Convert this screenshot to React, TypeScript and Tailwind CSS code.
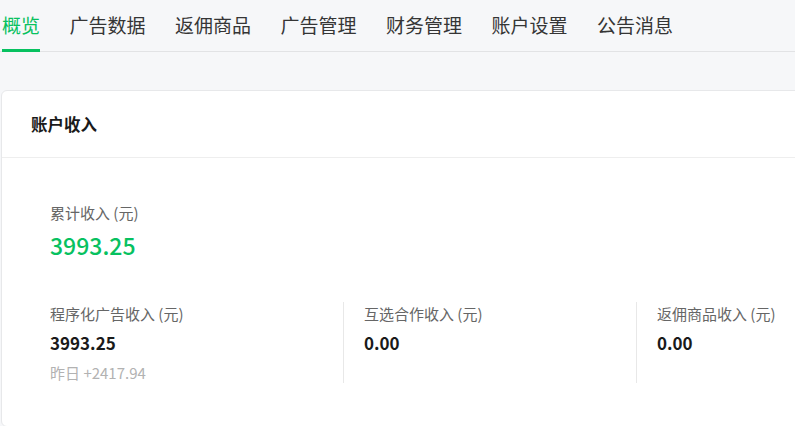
const tabs = ["概览", "广告数据", "返佣商品", "广告管理", "财务管理", "账户设置", "公告消息"];

const channels = [
  { label: "程序化广告收入 (元)", value: "3993.25", yesterday: "+2417.94" },
  { label: "互选合作收入 (元)", value: "0.00" },
  { label: "返佣商品收入 (元)", value: "0.00" },
];

export default function App() {
  return (
    <div
      className="min-h-screen bg-[#f6f7f9] overflow-hidden"
      style={{ fontFamily: '"Noto Sans CJK SC", "Noto Sans", sans-serif' }}
    >
      <div className="flex h-[52px] border-b border-[#e2e3e5] pl-[2px]">
        {tabs.map((tab, i) => (
          <div
            key={tab}
            className={
              i === 0
                ? "relative mr-[29.5px] flex shrink-0 items-center text-[19px] text-[#07c160]"
                : "relative mr-[29.5px] flex shrink-0 items-center text-[19px] text-[#353535]"
            }
          >
            {tab}
            {i === 0 && (
              <span className="absolute bottom-[-1px] left-0 right-0 h-[3px] bg-[#07c160]" />
            )}
          </div>
        ))}
      </div>

      <div className="ml-[1px] mt-[38px] w-[960px] rounded-md border border-[#e7e8ea] bg-white">
        <div className="flex h-[67px] items-center border-b border-[#eeeeee] pl-[29px] text-[16.5px] font-bold text-[#1a1a1a]">
          账户收入
        </div>
        <div className="pl-[48px] pt-[44px] pb-[43px]">
          <div className="text-[15px] leading-[22px] text-[#666]">累计收入 (元)</div>
          <div className="mt-[6px] text-[23px] leading-[30px] font-medium text-[#07c160]">3993.25</div>
          <div className="mt-[42px] flex">
            {channels.map((c, i) => (
              <div
                key={c.label}
                className={
                  i === 0
                    ? "h-[81px] w-[294px] shrink-0 border-r border-[#e8e8e8]"
                    : i === 1
                    ? "h-[81px] w-[293px] shrink-0 border-r border-[#e8e8e8] pl-[20px]"
                    : "h-[81px] w-[293px] shrink-0 pl-[20px]"
                }
              >
                <div className="mt-[1px] text-[15px] leading-[22px] text-[#666]">{c.label}</div>
                <div className="mt-[6px] text-[17px] leading-[24px] font-semibold text-[#1a1a1a]">{c.value}</div>
                {c.yesterday && (
                  <div className="mt-[7px] text-[15px] leading-[22px] text-[#b2b2b2]">
                    昨日 {c.yesterday}
                  </div>
                )}
              </div>
            ))}
          </div>
        </div>
      </div>
    </div>
  );
}
